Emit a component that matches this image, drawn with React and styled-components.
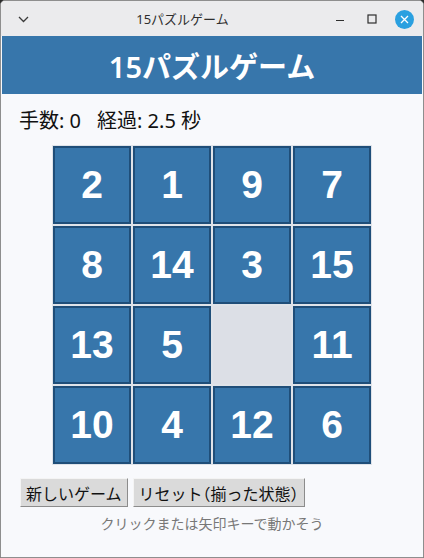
import React, { useState } from 'react'
import styled, { createGlobalStyle } from 'styled-components'

const GlobalStyle = createGlobalStyle`
  html, body {
    margin: 0;
    padding: 0;
    background: #2b2b2b;
  }
  body {
    font-family: "Noto Sans", "Noto Sans CJK JP", sans-serif;
  }
`;

const StyledWindow = styled.div`
    width: 424px;
    height: 558px;
    box-sizing: border-box;
    border: 1px solid #8e8e8e;
    border-radius: 5px 5px 0 0;
    background-color: #f8f9fc;
    display: flex;
    flex-direction: column;
    overflow: hidden;
`;

const StyledTitleBar = styled.div`
    height: 35px;
    flex-shrink: 0;
    display: grid;
    grid-template-columns: 40px 1fr 99px;
    align-items: center;
    background-color: #ebebed;
    color: #2e2e2e;
    font-size: 13px;
`;

const StyledTitleText = styled.div`
    text-align: center;
    line-height: 35px;
    padding-top: 1px;
`;

const StyledMenuIcon = styled.div`
    display: flex;
    align-items: center;
    padding-left: 17px;
    padding-top: 1px;
`;

const StyledWindowButtons = styled.div`
    display: flex;
    align-items: center;
    padding-right: 3px;
    justify-content: flex-end;
`;

const StyledWindowButton = styled.div`
    width: 32px;
    height: 35px;
    display: flex;
    align-items: center;
    justify-content: center;
`;

const StyledContent = styled.div`
    flex: 1;
    display: flex;
    flex-direction: column;
    padding: 0 1px;
`;

const StyledHeader = styled.h1`
    margin: 0;
    height: 58px;
    background-color: #3776ab;
    color: white;
    font-size: 29px;
    font-weight: 600;
    display: flex;
    align-items: center;
    justify-content: center;
    padding-bottom: 1px;
    box-sizing: border-box;
`;

const StyledMain = styled.div`
    display: flex;
    flex-direction: column;
    padding: 13px 16px 0 16px;
`;

const StyledStats = styled.div`
    display: flex;
    gap: 16px;
    font-size: 20px;
    line-height: 28px;
    color: #111;
    padding-left: 1px;
`;

const StyledBoard = styled.div`
    align-self: center;
    margin-top: 10px;
    display: grid;
    grid-template-columns: repeat(4, 78px);
    grid-auto-rows: 78px;
    gap: 2px;
    padding: 1px;
    background-color: #dfe3e9;
`;

const StyledTile = styled.div`
    box-sizing: border-box;
    border: 2px solid ${props => props.empty ? '#dcdfe6' : '#1f4e79'};
    background-color: ${props => props.empty ? '#dcdfe6' : '#3776ab'};
    color: white;
    font-family: "Liberation Sans", Arial, sans-serif;
    font-weight: bold;
    font-size: 39px;
    display: flex;
    align-items: center;
    justify-content: center;
    cursor: ${props => props.empty ? 'default' : 'pointer'};
    user-select: none;
`;

const StyledControls = styled.div`
    display: flex;
    gap: 5px;
    margin-top: 13px;
    padding-left: 2px;
`;

const StyledButton = styled.button`
    height: 29px;
    box-sizing: border-box;
    padding: 0 5px;
    font-family: "Noto Sans CJK JP", sans-serif;
    font-size: 16px;
    color: #111;
    background-color: #dadada;
    border-top: 1px solid #f4f4f4;
    border-left: 1px solid #f4f4f4;
    border-right: 1px solid #8c8c8c;
    border-bottom: 1px solid #8c8c8c;
    border-radius: 0;
    cursor: pointer;
`;

const StyledParen = styled.span`
    font-feature-settings: "halt";
`;

const StyledHint = styled.div`
    margin-top: 7px;
    text-align: center;
    font-size: 14px;
    line-height: 20px;
    color: #777;
`;

const initialBoard = [2, 1, 9, 7, 8, 14, 3, 15, 13, 5, 0, 11, 10, 4, 12, 6];

const ChevronIcon = () => (
    <svg width="11" height="7" viewBox="0 0 11 7">
        <path d="M1 1 L5.5 5.5 L10 1" fill="none" stroke="#3a3a3a" strokeWidth="1.3" />
    </svg>
);

const MinimizeIcon = () => (
    <svg width="10" height="10" viewBox="0 0 10 10">
        <path d="M1 6.5 H9" stroke="#2e2e2e" strokeWidth="1.2" />
    </svg>
);

const MaximizeIcon = () => (
    <svg width="10" height="10" viewBox="0 0 10 10">
        <rect x="1" y="1" width="8" height="8" fill="none" stroke="#2e2e2e" strokeWidth="1.2" />
    </svg>
);

const CloseIcon = () => (
    <svg width="19" height="19" viewBox="0 0 19 19">
        <circle cx="9.5" cy="9.5" r="9.5" fill="#2aa0e0" />
        <path d="M6 6 L13 13 M13 6 L6 13" stroke="white" strokeWidth="1.3" />
    </svg>
);

export default function App() {
    const [board, setBoard] = useState(initialBoard);
    const [moves, setMoves] = useState(0);

    const moveTile = (index) => {
        const empty = board.indexOf(0);
        const row = Math.floor(index / 4), col = index % 4;
        const erow = Math.floor(empty / 4), ecol = empty % 4;
        if (Math.abs(row - erow) + Math.abs(col - ecol) !== 1) return;
        const next = [...board];
        next[empty] = board[index];
        next[index] = 0;
        setBoard(next);
        setMoves(moves + 1);
    };

    return (
        <>
            <GlobalStyle />
            <StyledWindow>
                <StyledTitleBar>
                    <StyledMenuIcon><ChevronIcon /></StyledMenuIcon>
                    <StyledTitleText>15パズルゲーム</StyledTitleText>
                    <StyledWindowButtons>
                        <StyledWindowButton><MinimizeIcon /></StyledWindowButton>
                        <StyledWindowButton><MaximizeIcon /></StyledWindowButton>
                        <StyledWindowButton><CloseIcon /></StyledWindowButton>
                    </StyledWindowButtons>
                </StyledTitleBar>
                <StyledContent>
                    <StyledHeader>15パズルゲーム</StyledHeader>
                    <StyledMain>
                        <StyledStats>
                            <span>手数: {moves}</span>
                            <span>経過: 2.5 秒</span>
                        </StyledStats>
                        <StyledBoard>
                            {board.map((n, key) =>
                                <StyledTile key={key} empty={n === 0} onClick={() => moveTile(key)}>
                                    {n !== 0 && n}
                                </StyledTile>
                            )}
                        </StyledBoard>
                        <StyledControls>
                            <StyledButton onClick={() => { setBoard(initialBoard); setMoves(0); }}>
                                新しいゲーム
                            </StyledButton>
                            <StyledButton onClick={() => { setBoard([1,2,3,4,5,6,7,8,9,10,11,12,13,14,15,0]); setMoves(0); }}>
                                リセット<StyledParen>（</StyledParen>揃った状態<StyledParen>）</StyledParen>
                            </StyledButton>
                        </StyledControls>
                        <StyledHint>クリックまたは矢印キーで動かそう</StyledHint>
                    </StyledMain>
                </StyledContent>
            </StyledWindow>
        </>
    )
}
